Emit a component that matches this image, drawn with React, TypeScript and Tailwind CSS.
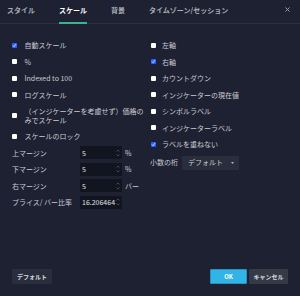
import { useState } from "react";

const leftChecks = [
  { label: "自動スケール", checked: true },
  { label: "%", checked: false },
  { label: "Indexed to 100", checked: false },
  { label: "ログスケール", checked: false },
];

const rightChecks = [
  { label: "左軸", checked: false },
  { label: "右軸", checked: true },
  { label: "カウントダウン", checked: false },
  { label: "インジケーターの現在値", checked: false },
  { label: "シンボルラベル", checked: false },
  { label: "インジケーターラベル", checked: false },
  { label: "ラベルを重ねない", checked: true },
];

const margins = [
  { label: "上マージン", value: "5", suffix: "%" },
  { label: "下マージン", value: "5", suffix: "%" },
  { label: "右マージン", value: "5", suffix: "バー" },
  { label: "プライス/ バー比率", value: "16.206464", suffix: "" },
];

function Checkbox({ checked }: { checked: boolean }) {
  return (
    <span
      className={`w-[5px] h-[5px] shrink-0 rounded-[1px] flex items-center justify-center ${
        checked ? "bg-[#2962ff]" : "bg-white"
      }`}
    >
      {checked && (
        <svg width="5" height="5" viewBox="0 0 5 5">
          <path d="M1 2.6 L2 3.6 L4 1.2" stroke="white" strokeWidth="0.8" fill="none" />
        </svg>
      )}
    </span>
  );
}

function Spinner() {
  return (
    <span className="flex flex-col items-center justify-center gap-[2px] w-[6px]">
      <svg width="4" height="3" viewBox="0 0 4 3">
        <path d="M0.5 2.5 L2 1 L3.5 2.5" stroke="#6a6d78" strokeWidth="0.6" fill="none" />
      </svg>
      <svg width="4" height="3" viewBox="0 0 4 3">
        <path d="M0.5 0.5 L2 2 L3.5 0.5" stroke="#6a6d78" strokeWidth="0.6" fill="none" />
      </svg>
    </span>
  );
}

export default function App() {
  const [tab] = useState("スケール");
  const tabs = ["スタイル", "スケール", "背景", "タイムゾーン/セッション"];

  return (
    <div
      className="w-[300px] h-[296px] bg-[#1e2131] text-[#c9ccd4] text-[7px] flex flex-col"
      style={{ fontFamily: '"Noto Sans CJK JP", "Noto Sans", sans-serif' }}
    >
      {/* タブ */}
      <div className="h-[24px] flex items-stretch px-[7px] gap-[24px] border-b border-[#2c303e] relative">
        {tabs.map((t) => (
          <div
            key={t}
            className={`flex items-center font-bold -mb-[1px] pb-[2px] border-b-2 ${
              t === tab ? "text-white border-[#3bb38e]" : "text-[#a9acb6] border-transparent"
            }`}
          >
            {t}
          </div>
        ))}
        <div className="absolute right-[10px] top-[7px]">
          <svg width="5" height="5" viewBox="0 0 5 5">
            <path d="M0.5 0.5 L4.5 4.5 M4.5 0.5 L0.5 4.5" stroke="#9a9da8" strokeWidth="1" />
          </svg>
        </div>
      </div>

      {/* 本体 */}
      <div className="flex pl-[12px] pt-[13px]">
        <div className="w-[139px] flex flex-col">
          {leftChecks.map((c) => (
            <div key={c.label} className="h-[16.5px] flex items-center gap-[7.5px]">
              <Checkbox checked={c.checked} />
              <span>{c.label}</span>
            </div>
          ))}
          <div className="h-[25px] flex items-center gap-[7.5px]">
            <Checkbox checked={false} />
            <span className="leading-[9px]">
              （インジケーターを考慮せず）価格の
              <br />
              みでスケール
            </span>
          </div>
          <div className="h-[16.5px] flex items-center gap-[7.5px]">
            <Checkbox checked={false} />
            <span>スケールのロック</span>
          </div>
          {margins.map((m) => (
            <div key={m.label} className="h-[16.5px] flex items-center">
              <span className="w-[68px]">{m.label}</span>
              <div className="w-[42px] h-[13px] bg-[#12151f] flex items-center justify-between pl-[2px] pr-[1px]">
                <span className="text-[#e0e2e8]">{m.value}</span>
                <Spinner />
              </div>
              <span className="ml-[3px]">{m.suffix}</span>
            </div>
          ))}
        </div>

        <div className="flex flex-col">
          {rightChecks.map((c) => (
            <div key={c.label} className="h-[16.5px] flex items-center gap-[6px]">
              <Checkbox checked={c.checked} />
              <span>{c.label}</span>
            </div>
          ))}
          <div className="h-[20px] flex items-center -ml-[1px]">
            <span className="w-[32px]">小数の桁</span>
            <div className="w-[57px] h-[14px] bg-[#2a2e3c] rounded-[1px] flex items-center justify-between pl-[6px] pr-[5px]">
              <span>デフォルト</span>
              <svg width="3" height="2" viewBox="0 0 3 2">
                <path d="M0 0 L3 0 L1.5 2 Z" fill="#b5b8c2" />
              </svg>
            </div>
          </div>
        </div>
      </div>

      {/* ボタン */}
      <div className="mt-auto flex items-center px-[12px] pb-[12px]">
        <button className="w-[40px] h-[15px] bg-[#2a2e3c] rounded-[1px] font-bold text-[6px] text-[#d8dbe2]">
          デフォルト
        </button>
        <div className="flex-1" />
        <button className="w-[37px] h-[15px] bg-[#32b4e6] border border-[#2592c2] rounded-[1px] font-bold text-[6px] text-white">
          OK
        </button>
        <button className="ml-[2px] w-[39px] h-[15px] bg-[#363a47] rounded-[1px] font-bold text-[6px] text-[#d8dbe2]">
          キャンセル
        </button>
      </div>
    </div>
  );
}
